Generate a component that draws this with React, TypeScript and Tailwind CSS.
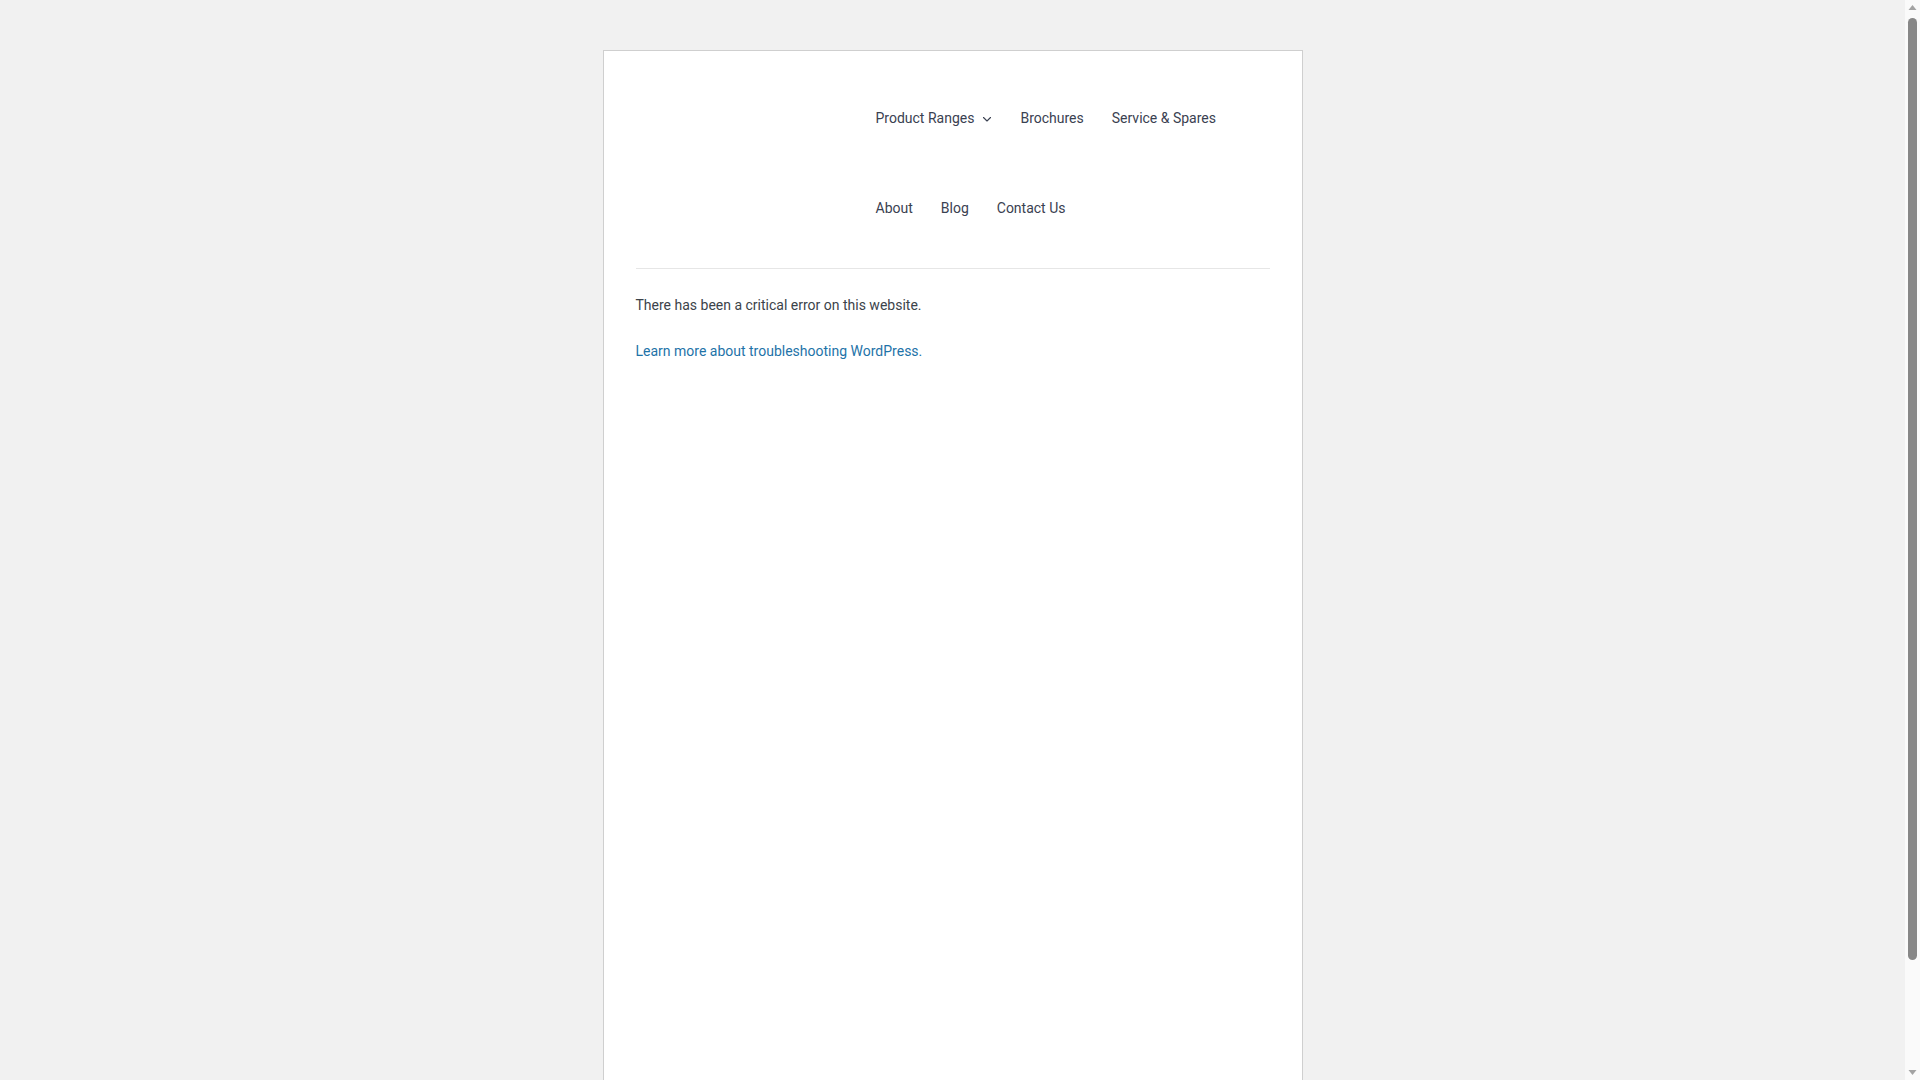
const topNav = ['Product Ranges', 'Brochures', 'Service & Spares'];
const bottomNav = ['About', 'Blog', 'Contact Us'];

function Chevron() {
  return (
    <svg width="10" height="10" viewBox="0 0 10 10" className="ml-[8px] mt-[2px]" fill="none">
      <path d="M1.5 3.5 5 7l3.5-3.5" stroke="#3a4151" strokeWidth="1.1" strokeLinecap="round" strokeLinejoin="round" />
    </svg>
  );
}

function NavRow({ items }: { items: string[] }) {
  return (
    <ul className="flex items-center gap-[28px] h-[20px]">
      {items.map((item) => (
        <li key={item} className="flex items-center text-[14px] leading-[20px] text-[#3a4151]">
          <a href="#">{item}</a>
          {item === 'Product Ranges' && <Chevron />}
        </li>
      ))}
    </ul>
  );
}

// window scrollbar as in the screenshot
function Scrollbar() {
  return (
    <aside className="w-[15px] h-full flex flex-col items-center bg-[#fafafa]">
      <svg width="15" height="15" viewBox="0 0 15 15" className="shrink-0">
        <path d="M3.5 10h8l-4-5z" fill="#a3a3a3" />
      </svg>
      <div className="w-[9px] h-[942px] mt-[3px] rounded-full bg-[#878787]" />
      <div className="flex-1" />
      <svg width="15" height="15" viewBox="0 0 15 15" className="shrink-0">
        <path d="M3.5 5h8l-4 5z" fill="#a3a3a3" />
      </svg>
    </aside>
  );
}

export default function App() {
  return (
    <div className="h-screen flex bg-[#f1f1f1] font-['Roboto','Liberation_Sans',sans-serif]">
      <main className="flex-1 overflow-hidden pt-[50px]">
        <div className="mx-auto w-[700px] min-h-[1120px] bg-white border border-[#cfcfcf] px-8">
          <header className="pl-[240px] pt-[57px] pb-[50px] border-b border-[#e6e6e6]">
            <nav className="flex flex-col gap-[70px]">
              <NavRow items={topNav} />
              <NavRow items={bottomNav} />
            </nav>
          </header>

          <div className="pt-[26px] text-[14px] leading-[21px] text-[#3c434a]">
            <p>There has been a critical error on this website.</p>
            <p className="mt-[25px]">
              <a href="#" className="text-[#1e73a8]">
                Learn more about troubleshooting WordPress.
              </a>
            </p>
          </div>
        </div>
      </main>
      <Scrollbar />
    </div>
  );
}
